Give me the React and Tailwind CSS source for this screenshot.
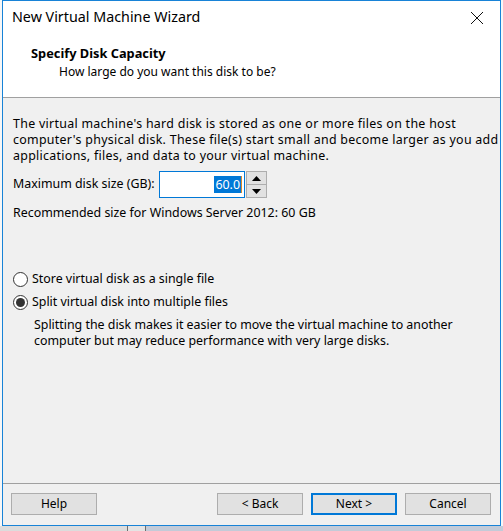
import React, { useState } from "react";

const ui = { fontFamily: '"Noto Sans", "Open Sans", sans-serif' };

function Radio({ checked, label, onClick }) {
  return (
    <div className="flex items-center h-[18px] cursor-default" onClick={onClick}>
      <span className="w-[15px] h-[15px] rounded-full border border-[#333] bg-white flex items-center justify-center">
        {checked && <span className="w-[9px] h-[9px] rounded-full bg-[#333]" />}
      </span>
      <span className="ml-[4px]">{label}</span>
    </div>
  );
}

function Button({ children, primary }) {
  return (
    <button
      className={`w-[86px] h-[22px] bg-[#e1e1e1] text-[12px] text-black flex items-center justify-center ${
        primary ? "border-2 border-[#0078d7]" : "border border-[#adadad]"
      }`}
    >
      {children}
    </button>
  );
}

export default function App() {
  const [split, setSplit] = useState(true);

  return (
    <div className="w-[503px] h-[531px] bg-[#cdd3dc] overflow-hidden text-[12px] text-black" style={ui}>
      <div className="flex h-[526px] bg-white">
        <div className="w-[2px] bg-[#f7f7f7]" />
        <div className="w-[499px] border border-[#1883d7] flex flex-col">
          {/* Header */}
          <div className="bg-white h-[97px] border-b border-[#a0a0a0] flex flex-col">
            <div className="h-[33px] flex items-center justify-between pl-[9px] pr-[14px]">
              <span className="text-[14.3px] leading-none -mt-[1px]">New Virtual Machine Wizard</span>
              <svg width="14" height="14" viewBox="0 0 14 14" className="mr-[2px]">
                <path d="M1 1 L13 13 M13 1 L1 13" stroke="#111" strokeWidth="1" />
              </svg>
            </div>
            <div className="pl-[28px] mt-[11px] font-bold text-[12.8px] leading-[16px]">Specify Disk Capacity</div>
            <div className="pl-[56px] mt-[3px] leading-[16px]">How large do you want this disk to be?</div>
          </div>

          {/* Body */}
          <div className="flex-1 bg-[#f0f0f0] flex flex-col text-[12.4px]">
            <div className="px-[10px] pt-[18px] flex-1">
              <p className="leading-[16px] whitespace-nowrap tracking-[0.3px]">
                The virtual machine's hard disk is stored as one or more files on the host
                <br />
                computer's physical disk. These file(s) start small and become larger as you add
                <br />
                applications, files, and data to your virtual machine.
              </p>

              <div className="flex items-center mt-[7px] h-[27px]">
                <span className="w-[146px]">Maximum disk size (GB):</span>
                <div className="w-[86px] h-[27px] bg-white border border-[#0078d7] flex items-center justify-end pr-[2px]">
                  <span className="bg-[#0078d7] text-white leading-[17px] px-[1px]">60.0</span>
                  <span className="w-[1px] h-[17px] bg-[#d88a2c]" />
                </div>
                <div className="w-[21px] h-[27px] border border-[#adadad] bg-[#f0f0f0] flex flex-col ml-[1px]">
                  <div className="flex-1 bg-[#e1e1e1] border-b border-[#adadad] flex items-center justify-center">
                    <svg width="9" height="5" viewBox="0 0 9 5"><path d="M4.5 0 L9 5 L0 5 Z" fill="#000" /></svg>
                  </div>
                  <div className="flex-1 bg-[#e1e1e1] flex items-center justify-center">
                    <svg width="9" height="5" viewBox="0 0 9 5"><path d="M0 0 L9 0 L4.5 5 Z" fill="#000" /></svg>
                  </div>
                </div>
              </div>

              <p className="mt-[7px] leading-[16px]">Recommended size for Windows Server 2012: 60 GB</p>

              <div className="mt-[49px] flex flex-col gap-[5px]">
                <Radio checked={!split} label="Store virtual disk as a single file" onClick={() => setSplit(false)} />
                <Radio checked={split} label="Split virtual disk into multiple files" onClick={() => setSplit(true)} />
              </div>
              <p className="mt-[6px] pl-[21px] leading-[16px] whitespace-nowrap">
                Splitting the disk makes it easier to move the virtual machine to another
                <br />
                computer but may reduce performance with very large disks.
              </p>
            </div>

            {/* Footer */}
            <div className="border-t border-[#a0a0a0] h-[42px] flex items-center pl-[8px] pr-[9px] pb-[2px]">
              <Button>Help</Button>
              <div className="flex-1" />
              <div className="flex gap-[8px]">
                <Button>&lt; Back</Button>
                <Button primary>Next &gt;</Button>
                <Button>Cancel</Button>
              </div>
            </div>
          </div>
        </div>
        <div className="flex-1 bg-[#f7f7f7]" />
      </div>
      <div className="flex h-[5px]">
        <div className="w-[127px] bg-[#dcdcdc]" />
        <div className="w-[1px] bg-[#6e6e6e]" />
        <div className="w-[17px] bg-[#e4e4e4]" />
        <div className="w-[1px] bg-[#6e6e6e]" />
        <div className="flex-1 bg-[#c3cbd8]" />
      </div>
    </div>
  );
}
